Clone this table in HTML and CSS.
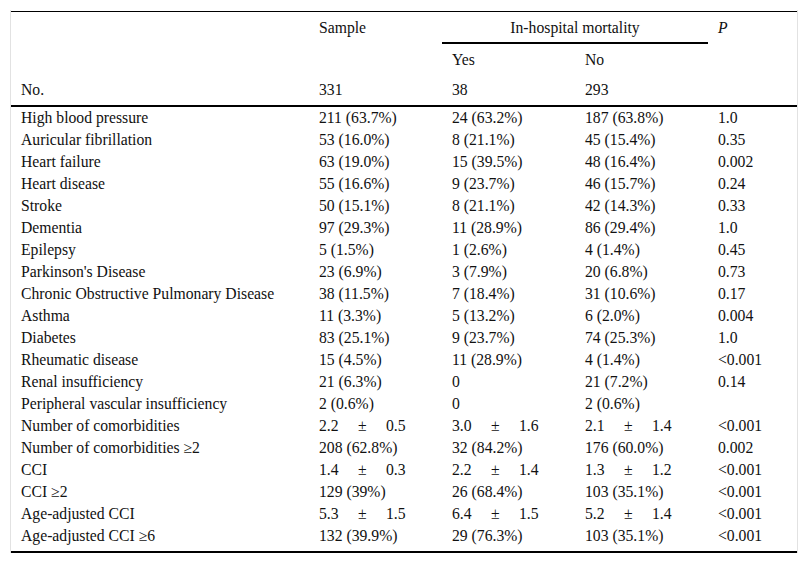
FILE: index.html
```html
<!DOCTYPE html>
<html>
<head>
<meta charset="utf-8">
<link rel="stylesheet" href="styles.css">
</head>
<body>
<div class="frame">
<table class="tbl">
<colgroup>
<col class="c-name"><col class="c-num"><col class="c-num"><col class="c-num"><col class="c-p">
</colgroup>
<thead>
<tr class="h1">
<th rowspan="2"></th>
<th rowspan="2" class="top">Sample</th>
<th colspan="2" class="group">In-hospital mortality</th>
<th rowspan="2" class="top"><i>P</i></th>
</tr>
<tr class="h2">
<th>Yes</th>
<th>No</th>
</tr>
<tr class="h3">
<th>No.</th>
<th>331</th>
<th>38</th>
<th>293</th>
<th></th>
</tr>
</thead>
<tbody>
<tr><td>High blood pressure</td><td>211 (63.7%)</td><td>24 (63.2%)</td><td>187 (63.8%)</td><td>1.0</td></tr>
<tr><td>Auricular fibrillation</td><td>53 (16.0%)</td><td>8 (21.1%)</td><td>45 (15.4%)</td><td>0.35</td></tr>
<tr><td>Heart failure</td><td>63 (19.0%)</td><td>15 (39.5%)</td><td>48 (16.4%)</td><td>0.002</td></tr>
<tr><td>Heart disease</td><td>55 (16.6%)</td><td>9 (23.7%)</td><td>46 (15.7%)</td><td>0.24</td></tr>
<tr><td>Stroke</td><td>50 (15.1%)</td><td>8 (21.1%)</td><td>42 (14.3%)</td><td>0.33</td></tr>
<tr><td>Dementia</td><td>97 (29.3%)</td><td>11 (28.9%)</td><td>86 (29.4%)</td><td>1.0</td></tr>
<tr><td>Epilepsy</td><td>5 (1.5%)</td><td>1 (2.6%)</td><td>4 (1.4%)</td><td>0.45</td></tr>
<tr><td>Parkinson's Disease</td><td>23 (6.9%)</td><td>3 (7.9%)</td><td>20 (6.8%)</td><td>0.73</td></tr>
<tr><td>Chronic Obstructive Pulmonary Disease</td><td>38 (11.5%)</td><td>7 (18.4%)</td><td>31 (10.6%)</td><td>0.17</td></tr>
<tr><td>Asthma</td><td>11 (3.3%)</td><td>5 (13.2%)</td><td>6 (2.0%)</td><td>0.004</td></tr>
<tr><td>Diabetes</td><td>83 (25.1%)</td><td>9 (23.7%)</td><td>74 (25.3%)</td><td>1.0</td></tr>
<tr><td>Rheumatic disease</td><td>15 (4.5%)</td><td>11 (28.9%)</td><td>4 (1.4%)</td><td>&lt;0.001</td></tr>
<tr><td>Renal insufficiency</td><td>21 (6.3%)</td><td>0</td><td>21 (7.2%)</td><td>0.14</td></tr>
<tr><td>Peripheral vascular insufficiency</td><td>2 (0.6%)</td><td>0</td><td>2 (0.6%)</td><td></td></tr>
<tr><td>Number of comorbidities</td><td><span class="m">2.2</span><span class="pm">±</span>0.5</td><td><span class="m">3.0</span><span class="pm">±</span>1.6</td><td><span class="m">2.1</span><span class="pm">±</span>1.4</td><td>&lt;0.001</td></tr>
<tr><td>Number of comorbidities ≥2</td><td>208 (62.8%)</td><td>32 (84.2%)</td><td>176 (60.0%)</td><td>0.002</td></tr>
<tr><td>CCI</td><td><span class="m">1.4</span><span class="pm">±</span>0.3</td><td><span class="m">2.2</span><span class="pm">±</span>1.4</td><td><span class="m">1.3</span><span class="pm">±</span>1.2</td><td>&lt;0.001</td></tr>
<tr><td>CCI ≥2</td><td>129 (39%)</td><td>26 (68.4%)</td><td>103 (35.1%)</td><td>&lt;0.001</td></tr>
<tr><td>Age-adjusted CCI</td><td><span class="m">5.3</span><span class="pm">±</span>1.5</td><td><span class="m">6.4</span><span class="pm">±</span>1.5</td><td><span class="m">5.2</span><span class="pm">±</span>1.4</td><td>&lt;0.001</td></tr>
<tr class="last"><td>Age-adjusted CCI ≥6</td><td>132 (39.9%)</td><td>29 (76.3%)</td><td>103 (35.1%)</td><td>&lt;0.001</td></tr>
</tbody>
</table>
</div>
</body>
</html>
```

FILE: styles.css
```css
html, body {
  margin: 0;
  padding: 0;
  background: #fff;
}

body {
  font-family: "Liberation Serif", "Times New Roman", serif;
  font-size: 15.7px;
  color: #111;
}

.frame {
  margin: 10px 0 0 10px;
  width: 786px;
  border-left: 1px solid #e2e2e2;
  border-right: 1px solid #e2e2e2;
  padding-top: 1px;
}

.tbl {
  width: 786px;
  table-layout: fixed;
  border-collapse: separate;
  border-spacing: 0;
  border-top: 1px solid #000;
}

.c-name { width: 298px; }
.c-num { width: 133px; }
.c-p { width: 89px; }

.tbl th,
.tbl td {
  text-align: left;
  font-weight: normal;
  padding: 0 0 0 10px;
  white-space: nowrap;
  line-height: 17px;
}

.tbl th.top {
  vertical-align: top;
  padding-top: 7px;
}

.h1 th.group {
  height: 30px;
  text-align: center;
  padding-left: 0;
  vertical-align: middle;
  border-bottom: 2px solid #000;
}

.h2 th {
  height: 30px;
  vertical-align: middle;
}

.h3 th {
  height: 31px;
  vertical-align: middle;
  border-bottom: 2px solid #000;
}

.tbl td {
  height: 22px;
  line-height: 22px;
  vertical-align: top;
}

.tbl tr.last td {
  padding-bottom: 4px;
  border-bottom: 2px solid #000;
}

.m {
  display: inline-block;
  width: 39px;
}

.pm {
  display: inline-block;
  width: 28px;
}
```
